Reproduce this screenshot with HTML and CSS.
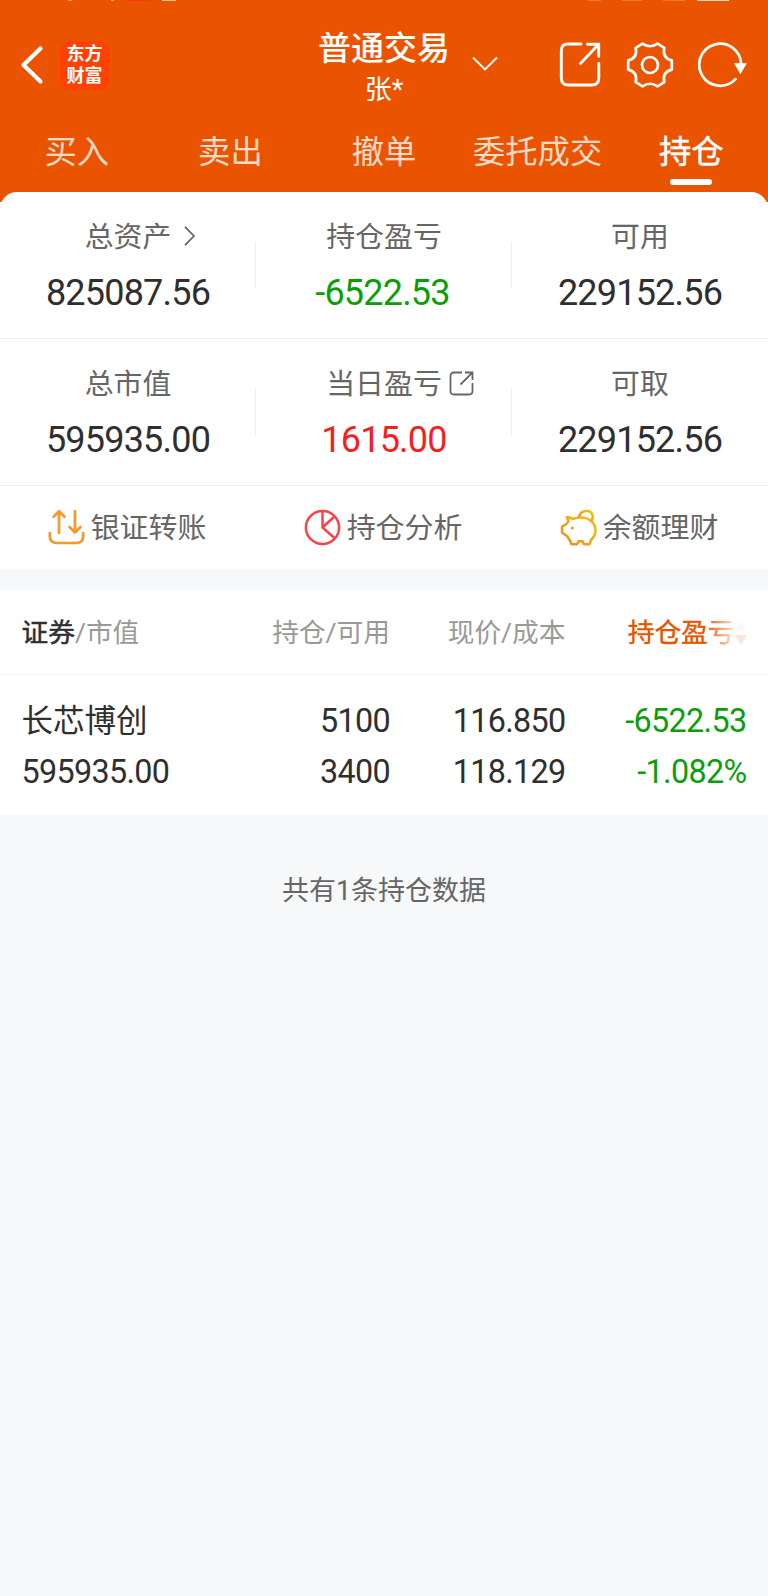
FILE: index.html
```
<!DOCTYPE html>
<html lang="zh-CN">
<head>
    <meta charset="UTF-8">
    <meta name="viewport" content="width=device-width, initial-scale=1.0">
    <title>普通交易 - 持仓</title>
    <link rel="stylesheet" href="styles.css">
</head>
<body>
    <header class="header">
        <svg class="status-bar" width="768" height="2" viewBox="0 0 768 2">
            <path d="M68 0h4v1h-4zM111 0h3v1h-3z" fill="#f3a67c"/>
            <path d="M128 0h22v1h-22z" fill="#fb3a0c"/>
            <path d="M162 0h14v1h-14z" fill="#e0c39a"/>
            <path d="M588 0h13v1h-13zM622 0h20v1h-20zM663 0h22v1h-22z" fill="#ed7838"/>
            <path d="M697 0h32v1h-32z" fill="#f8d8c0"/>
        </svg>
        <div class="top-bar">
            <div class="top-left">
                <svg class="back" width="24" height="40" viewBox="0 0 24 40" fill="none" stroke="#fff" stroke-width="4.2" stroke-linecap="round">
                    <path d="M20.5 3.5L3.5 20l17 16.5" stroke-linejoin="round"/>
                </svg>
                <div class="logo">东方<br>财富</div>
            </div>
            <div class="title">
                <h1>普通交易</h1>
                <p>张*</p>
            </div>
            <div class="top-right">
                <svg class="drop" width="28" height="16" viewBox="0 0 28 16" fill="none" stroke="#fff" stroke-width="1.9">
                    <path d="M2 1.5l12 12 12-12"/>
                </svg>
                <svg class="share" width="43" height="48" viewBox="0 0 43 48" fill="none" stroke="#fff" stroke-width="2.9" stroke-linecap="round">
                    <path d="M22 4H9Q2.3 4 2.3 11v27q0 7 7 7h23.5q7 0 7-7V23.5"/>
                    <path d="M28.500 4.3h11.2v12M39.2 4.8L21.500 23.5"/>
                </svg>
                <svg class="gear" width="48" height="48" viewBox="-24 -24 48 48" fill="none" stroke="#fff" stroke-width="2.7" stroke-linejoin="round">
                    <path d="M-7.5-21.3Q0-16.2 7.5-21.3L14.3-17.2C12.7-9.5 15.5-6 21.8-4.6V4.6C15.5 6 12.7 9.5 14.3 17.2L7.5 21.3Q0 16.2-7.5 21.3L-14.3 17.2C-12.7 9.5-15.5 6-21.8 4.6V-4.6C-15.5-6-12.7-9.5-14.3-17.2Z"/>
                    <circle r="8"/>
                </svg>
                <svg class="refresh" width="50" height="48" viewBox="0 0 50 48" fill="none" stroke="#fff" stroke-width="2.7" stroke-linecap="round">
                    <path d="M37.5 38.2A21 21 0 1 1 43.2 23.5"/>
                    <path d="M36 22.2h12.8l-6.4 11z" fill="#fff" stroke="none"/>
                </svg>
            </div>
        </div>
        <nav class="tabs">
            <a class="tab">买入</a>
            <a class="tab">卖出</a>
            <a class="tab">撤单</a>
            <a class="tab">委托成交</a>
            <a class="tab active">持仓</a>
        </nav>
    </header>

    <section class="summary">
        <div class="row">
            <div class="cell">
                <div class="label">总资产
                    <svg class="arrow" width="12" height="20" viewBox="0 0 12 20" fill="none" stroke="#666" stroke-width="1.7"><path d="M1 .8l9 9.2-9 9.2"/></svg>
                </div>
                <div class="value">825087.56</div>
            </div>
            <div class="cell">
                <div class="label">持仓盈亏</div>
                <div class="value green minus">-6522.53</div>
            </div>
            <div class="cell">
                <div class="label">可用</div>
                <div class="value">229152.56</div>
            </div>
        </div>
        <div class="row">
            <div class="cell">
                <div class="label">总市值</div>
                <div class="value">595935.00</div>
            </div>
            <div class="cell">
                <div class="label">当日盈亏
                    <svg class="open" width="25" height="25" viewBox="0 0 25 25" fill="none" stroke="#666" stroke-width="1.8"><path d="M13 1.5H5Q1.5 1.5 1.5 5v15q0 3.5 3.5 3.5h15q3.5 0 3.5-3.5v-8M16 1.5h7.5V9M23.3 1.7L11.5 13.5"/></svg>
                </div>
                <div class="value red">1615.00</div>
            </div>
            <div class="cell">
                <div class="label">可取</div>
                <div class="value">229152.56</div>
            </div>
        </div>
        <div class="actions">
            <a class="action">
                <svg width="37" height="37" viewBox="0 0 37 37" fill="none" stroke="#f39a2b" stroke-width="2.7" stroke-linecap="round" stroke-linejoin="round">
                    <path d="M1.8 24v3q0 7 7 7h19.4q7 0 7-7v-3"/>
                    <path d="M11 24V2.5M5.5 7.7L11 2.2l5.5 5.5M27 2v21M21.5 18l5.500 5.500 5.500-5.500"/>
                </svg>
                <span>银证转账</span>
            </a>
            <a class="action">
                <svg width="37" height="37" viewBox="0 0 37 37" fill="none" stroke="#fa4248" stroke-width="2.5">
                    <circle cx="18.5" cy="18.5" r="16.6"/>
                    <path d="M18.5 2v16.5L31 29.5M18.5 18.5L30.5 7.5"/>
                </svg>
                <span>持仓分析</span>
            </a>
            <a class="action">
                <svg width="37" height="37" viewBox="0 0 37 37" fill="none" stroke="url(#gold)" stroke-width="2.5" stroke-linejoin="round">
                    <defs><linearGradient id="gold" x1="1" y1="0" x2="0" y2="1"><stop offset="0" stop-color="#f8c20a"/><stop offset="1" stop-color="#f0891a"/></linearGradient></defs>
                    <path d="M6.8 8.2q3-.3 6 1.8Q16 8.5 20 8.500C30 8.500 35.500 14 35.500 21.500q0 5.500-4.500 9.300L29.500 35.200H24l-1.500-3h-4l-1.500 3h-5.500L10 31.500Q8.500 30 7.500 27.500L2 23.500v-6l4-2.200 2.500-3z"/>
                    <path d="M19 8.300C20.500.5 31 .2 32.600 6.500q.8 3.200-2 5.700"/>
                    <circle cx="12.3" cy="19" r="1.6" fill="#f39a1b" stroke="none"/>
                </svg>
                <span>余额理财</span>
            </a>
        </div>
    </section>

    <section class="holdings">
        <div class="grid head">
            <div><b>证券</b>/市值</div>
            <div>持仓/可用</div>
            <div>现价/成本</div>
            <div class="sorted">持仓盈亏<svg width="12" height="26" viewBox="0 0 12 26"><path d="M1 10.5L6 1l5 9.500z" fill="#ccc"/><path d="M0 15h12L6 25z" fill="#ea5400"/></svg></div>
        </div>
        <div class="grid stock">
            <div class="name">长芯博创</div>
            <div>5100</div>
            <div>116.850</div>
            <div class="green">-6522.53</div>
            <div>595935.00</div>
            <div>3400</div>
            <div>118.129</div>
            <div class="green">-1.082%</div>
        </div>
    </section>

    <p class="total">共有1条持仓数据</p>
</body>
</html>
```
FILE: styles.css
```
* {
    box-sizing: border-box;
}
body {
    margin: 0;
    min-height: 1596px;
    background-color: #f7f8fa;
    color: #2f2f2f;
    font-family: Roboto, "Noto Sans CJK SC", sans-serif;
}
h1, p {
    margin: 0;
}
svg {
    display: block;
    flex: none;
}

/* header */
.header {
    height: 202px;
    overflow: hidden;
    background-color: #ea5400;
    color: #fff;
}
.header::after {
    content: "";
    display: block;
    height: 30px;
    background-color: #fff;
    border-radius: 17px 17px 0 0;
}
.top-bar {
    display: grid;
    grid-template-columns: 1fr auto 1fr;
    height: 116px;
    padding-top: 26px;
}
.top-left {
    display: flex;
    align-items: flex-start;
    padding-left: 20px;
}
.back {
    margin-top: 17px;
}
.logo {
    width: 49px;
    height: 49px;
    margin: 13px 0 0 16px;
    padding-top: 2px;
    border-radius: 10px;
    background-color: #ff4203;
    font-size: 18px;
    font-weight: 700;
    line-height: 21.5px;
    text-align: center;
}
.title {
    text-align: center;
}
.title h1 {
    font-size: 33px;
    font-weight: 500;
    line-height: 42px;
}
.title p {
    font-size: 27px;
    line-height: 40px;
}
.top-right {
    display: flex;
    align-items: flex-start;
    padding-top: 13px;
}
.drop {
    margin: 15px 0 0 21px;
}
.share {
    margin-left: 60px;
    margin-top: -1px;
}
.gear {
    margin-left: 24px;
}
.refresh {
    margin-left: 24px;
}
.tabs {
    display: grid;
    grid-template-columns: repeat(5, 1fr);
    height: 73.5px;
}
.tab {
    display: flex;
    flex-direction: column;
    align-items: center;
    padding-top: 12px;
    font-size: 32.3px;
    line-height: 44px;
    color: rgba(255, 255, 255, 0.8);
}
.tab.active {
    color: #fff;
    -webkit-text-stroke: 0.5px #fff;
}
.tab.active::after {
    content: "";
    width: 42px;
    height: 6px;
    margin-top: 5px;
    border-radius: 3px;
    background-color: #fff;
}

/* account summary */
.summary {
    background-color: #fff;
}
.row {
    display: grid;
    grid-template-columns: repeat(3, 1fr);
    height: 147px;
    padding-top: 25px;
    border-bottom: 1px solid #efefef;
}
.row:first-child {
    height: 137px;
    padding-top: 15px;
}
.cell {
    text-align: center;
    background: linear-gradient(#eee, #eee) no-repeat right 25px / 1px 46px;
}
.cell:last-child {
    background: none;
}
.label {
    position: relative;
    width: fit-content;
    margin: 0 auto;
    font-size: 28.9px;
    line-height: 40px;
    color: #666;
}
.label svg {
    position: absolute;
    left: 100%;
}
.arrow {
    top: 9px;
    margin-left: 13px;
}
.open {
    top: 7px;
    margin-left: 7px;
}
.value {
    margin-top: 16px;
    font-size: 36px;
    line-height: 40px;
    letter-spacing: -0.8px;
}
.minus {
    padding-right: 3px;
}
.green {
    color: #0a9f0a;
}
.red {
    color: #f51f23;
}
.actions {
    display: grid;
    grid-template-columns: repeat(3, 1fr);
    height: 83px;
}
.action {
    display: flex;
    align-items: center;
    justify-content: center;
    gap: 6px;
    padding-right: 2px;
    font-size: 28.9px;
    line-height: 40px;
    color: #666;
}

/* holdings table */
.holdings {
    margin-top: 21px;
    background-color: #fff;
}
.grid {
    display: grid;
    grid-template-columns: 1fr 170px 175.5px 181px;
    padding: 0 21.5px;
    text-align: right;
}
.grid > div:nth-child(4n + 1) {
    text-align: left;
}
.head {
    height: 84.5px;
    border-bottom: 1.5px solid #f5f5f5;
    font-size: 26.7px;
    line-height: 86px;
    color: #999;
}
.head b {
    font-weight: 400;
    -webkit-text-stroke: 0.5px #2f2f2f;
    color: #2f2f2f;
}
.head .sorted {
    display: flex;
    align-items: center;
    justify-content: flex-end;
    -webkit-text-stroke: 0.4px #ea5400;
    color: #ea5400;
    -webkit-mask-image: linear-gradient(to left, rgba(0, 0, 0, 0.15) 12px, #000 42px);
    mask-image: linear-gradient(to left, rgba(0, 0, 0, 0.15) 12px, #000 42px);
}
.stock {
    height: 140.5px;
    padding-top: 21px;
    align-content: start;
    font-size: 32.3px;
    line-height: 51px;
    letter-spacing: -0.65px;
}
.name {
    font-size: 31.5px;
    letter-spacing: 0;
}
.total {
    margin-top: 56px;
    font-size: 27px;
    line-height: 40px;
    text-align: center;
    color: #666;
}
```
